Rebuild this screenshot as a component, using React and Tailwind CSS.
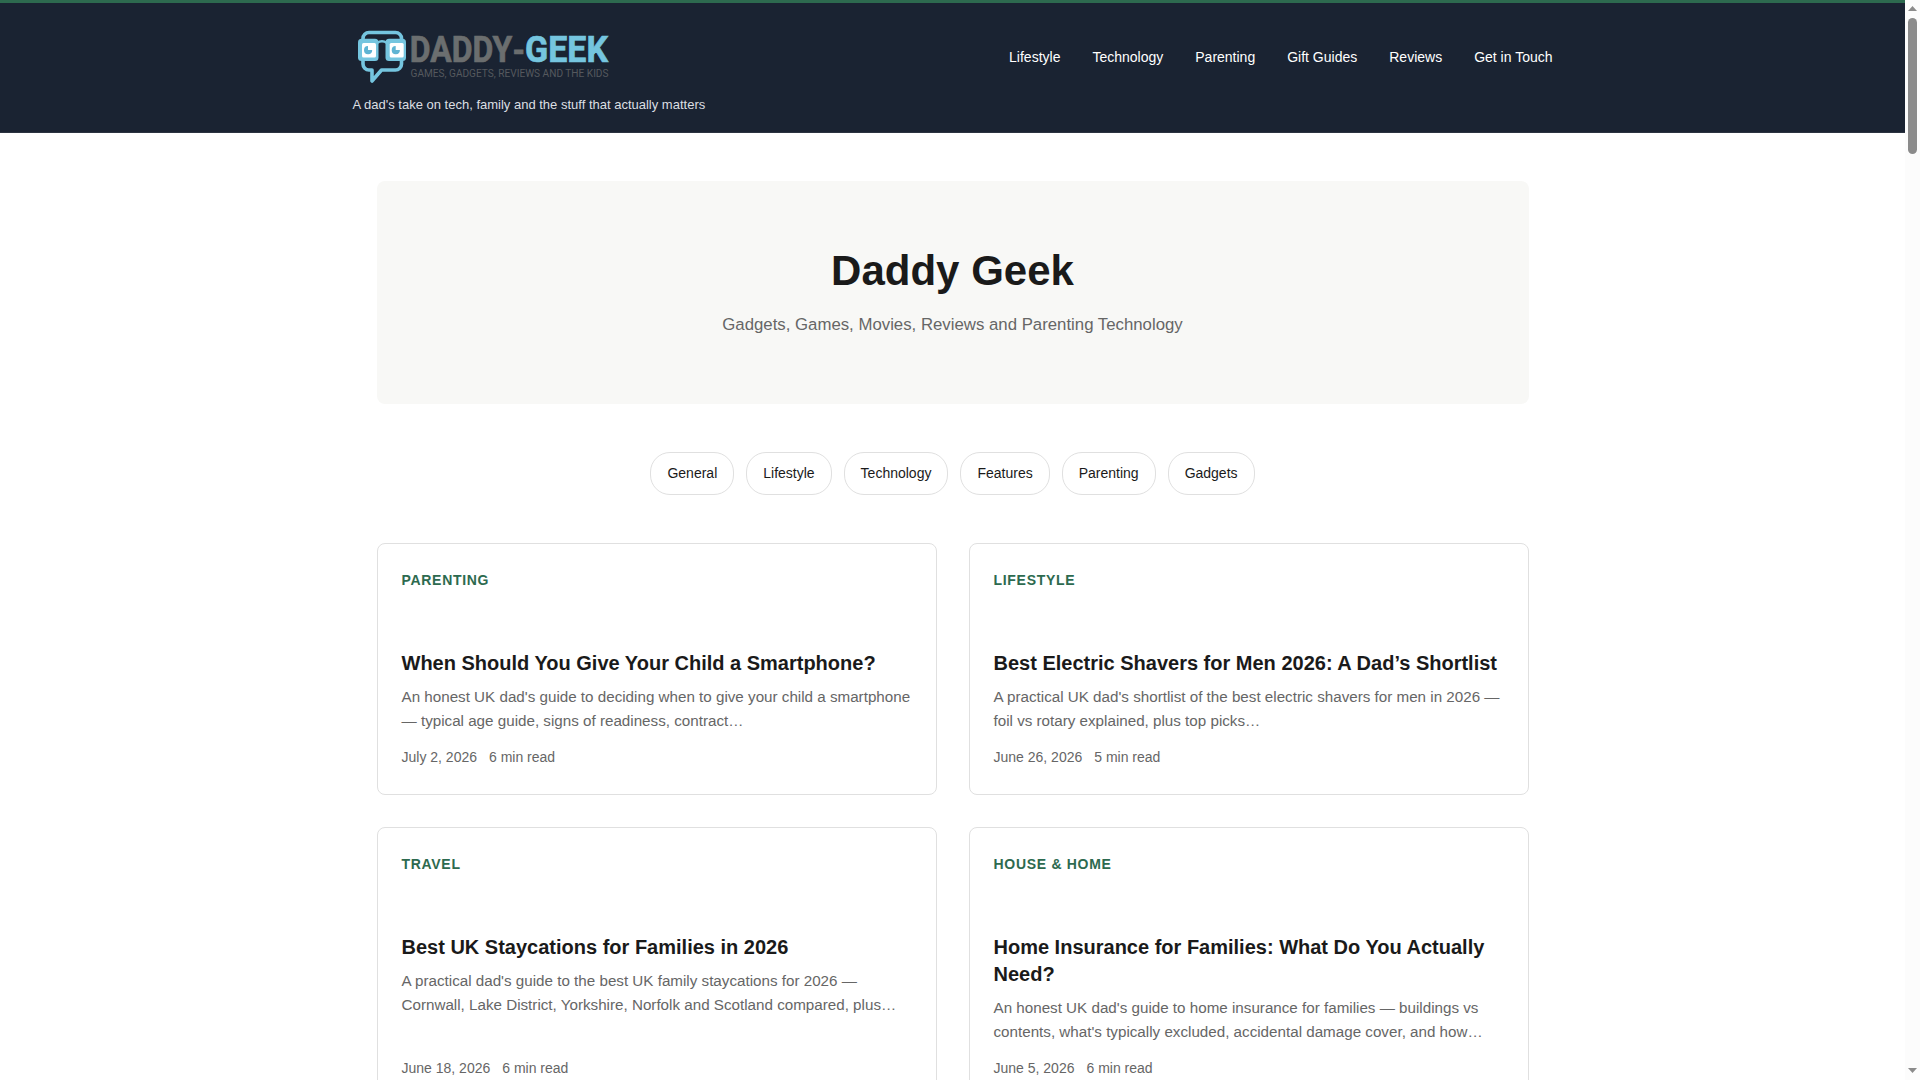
const NAV = ['Lifestyle', 'Technology', 'Parenting', 'Gift Guides', 'Reviews', 'Get in Touch']

const TOPICS = ['General', 'Lifestyle', 'Technology', 'Features', 'Parenting', 'Gadgets']

const POSTS = [
  {
    category: 'Parenting',
    title: 'When Should You Give Your Child a Smartphone?',
    excerpt:
      "An honest UK dad's guide to deciding when to give your child a smartphone — typical age guide, signs of readiness, contract…",
    date: 'July 2, 2026',
    read: '6 min read',
  },
  {
    category: 'Lifestyle',
    title: 'Best Electric Shavers for Men 2026: A Dad’s Shortlist',
    excerpt:
      "A practical UK dad's shortlist of the best electric shavers for men in 2026 — foil vs rotary explained, plus top picks…",
    date: 'June 26, 2026',
    read: '5 min read',
  },
  {
    category: 'Travel',
    title: 'Best UK Staycations for Families in 2026',
    excerpt:
      "A practical dad's guide to the best UK family staycations for 2026 — Cornwall, Lake District, Yorkshire, Norfolk and Scotland compared, plus…",
    date: 'June 18, 2026',
    read: '6 min read',
  },
  {
    category: 'House & Home',
    title: 'Home Insurance for Families: What Do You Actually Need?',
    excerpt:
      "An honest UK dad's guide to home insurance for families — buildings vs contents, what's typically excluded, accidental damage cover, and how…",
    date: 'June 5, 2026',
    read: '6 min read',
  },
]

function Logo() {
  return (
    <svg width="260" height="60" viewBox="352.5 27 260 60" className="block overflow-visible font-['Roboto',sans-serif]">
      <g transform="translate(-0.5 0)">
        {/* Speech bubble head */}
        <path
          d="M363 42v-3.5a6 6 0 0 1 6-6h26.500a6 6 0 0 1 6 6V64a6 6 0 0 1-6 6H381.500l-9.500 11V70h-3a6 6 0 0 1-6-6z"
          fill="none"
          stroke="#75c5df"
          strokeWidth="3.6"
          strokeLinejoin="round"
        />
        {/* Glasses */}
        <path d="M377 43q5-3.500 10 0" fill="none" stroke="#75c5df" strokeWidth="2.600" />
        <rect x="358" y="38.700" width="20.500" height="22.300" rx="3.500" fill="#75c5df" />
        <rect x="385.500" y="38.700" width="20.500" height="22.300" rx="3.500" fill="#75c5df" />
        <rect x="362" y="43" width="14" height="14.500" rx="1.500" fill="#fff" />
        <rect x="389.700" y="43" width="14" height="14.500" rx="1.500" fill="#fff" />
        <path d="M368 46v4h4.200a4.100 4.100 0 1 1-4.200-4z" fill="#5fb4d3" />
        <path d="M395.700 46v4h4.200a4.100 4.100 0 1 1-4.200-4z" fill="#5fb4d3" />
      </g>

      <g fontSize="36" fontWeight="700" strokeWidth="0.700">
        <text x="409.300" y="61.800" fill="#6b6e6f" stroke="#6b6e6f" textLength="102.500" lengthAdjust="spacingAndGlyphs">
          DADDY
        </text>
        <text x="512" y="62.500" fill="#6b6e6f" stroke="#6b6e6f" textLength="12.500" lengthAdjust="spacingAndGlyphs">
          -
        </text>
        <text x="524.600" y="61.800" fill="#75c5df" stroke="#75c5df" textLength="83" lengthAdjust="spacingAndGlyphs">
          GEEK
        </text>
      </g>
      <text x="410" y="76.700" fontSize="11.500" fill="#55595e" textLength="198" lengthAdjust="spacingAndGlyphs">
        GAMES, GADGETS, REVIEWS AND THE KIDS
      </text>
    </svg>
  )
}

function Header() {
  return (
    <header className="h-[133px] border-t-3 border-b border-t-[#2d6a4f] border-b-[#2b3340] bg-[#1a2332]">
      <div className="mx-auto flex w-[1200px] items-start justify-between pt-6">
        <div>
          <Logo />
          <p className="mt-[7px] text-[13px] leading-[22px] text-[#dcdfe2]">
            A dad's take on tech, family and the stuff that actually matters
          </p>
        </div>
        <nav className="flex h-[60px] items-center gap-8 text-sm text-white">
          {NAV.map((item) => (
            <a key={item} href="#">
              {item}
            </a>
          ))}
        </nav>
      </div>
    </header>
  )
}

function PostCard({ post }) {
  return (
    <article className="flex flex-col rounded-lg border border-[#e0e0e0] bg-white px-6 pt-[25px] pb-[24.8px]">
      <span className="text-sm leading-[23.8px] font-bold tracking-[0.05em] text-[#2d6a4f] uppercase">
        {post.category}
      </span>
      <h2 className="mt-[57px] text-xl leading-[27px] font-bold text-[#1a1a1a]">{post.title}</h2>
      <p className="mt-2 text-[15.2px] leading-[24.32px] text-[#666]">{post.excerpt}</p>
      <div className="mt-auto flex gap-3 pt-[12.2px] text-sm leading-[23.8px] text-[#666]">
        <span>{post.date}</span>
        <span>{post.read}</span>
      </div>
    </article>
  )
}

function Scrollbar() {
  return (
    <div className="flex w-[15px] flex-col items-center bg-[#fcfcfc]">
      <svg width="9" height="5" className="mt-1.5" fill="#8b8b8b">
        <path d="M4.500 0 9 5H0z" />
      </svg>
      <div className="mt-[7px] h-[136px] w-[9px] rounded-full bg-[#8b8b8b]" />
      <svg width="9" height="5" className="mt-auto mb-[7px]" fill="#8b8b8b">
        <path d="M0 0h9L4.500 5z" />
      </svg>
    </div>
  )
}

export default function App() {
  return (
    <div className="flex h-[1080px] w-[1920px] overflow-hidden bg-white font-['Liberation_Sans',Arial,sans-serif]">
      <div className="h-full flex-1 overflow-hidden">
        <Header />
        <main className="mx-auto w-[1152px] pt-12">
          <section className="flex h-[223px] flex-col items-center rounded-lg bg-[#f8f8f6] pt-[65px] text-center">
            <h1 className="text-[42px] leading-[50px] font-bold text-[#1a1a1a]">Daddy Geek</h1>
            <p className="mt-3.5 text-[16.8px] leading-[29px] text-[#666]">
              Gadgets, Games, Movies, Reviews and Parenting Technology
            </p>
          </section>

          <div className="mt-12 flex justify-center gap-3">
            {TOPICS.map((topic) => (
              <a
                key={topic}
                href="#"
                className="rounded-[20px] border border-[#e0e0e0] px-4 pt-[9px] pb-[10px] text-sm leading-[22px] text-[#1a1a1a]"
              >
                {topic}
              </a>
            ))}
          </div>

          <div className="mt-12 grid grid-cols-2 gap-8">
            {POSTS.map((post) => (
              <PostCard key={post.title} post={post} />
            ))}
          </div>
        </main>
      </div>
      <Scrollbar />
    </div>
  )
}
